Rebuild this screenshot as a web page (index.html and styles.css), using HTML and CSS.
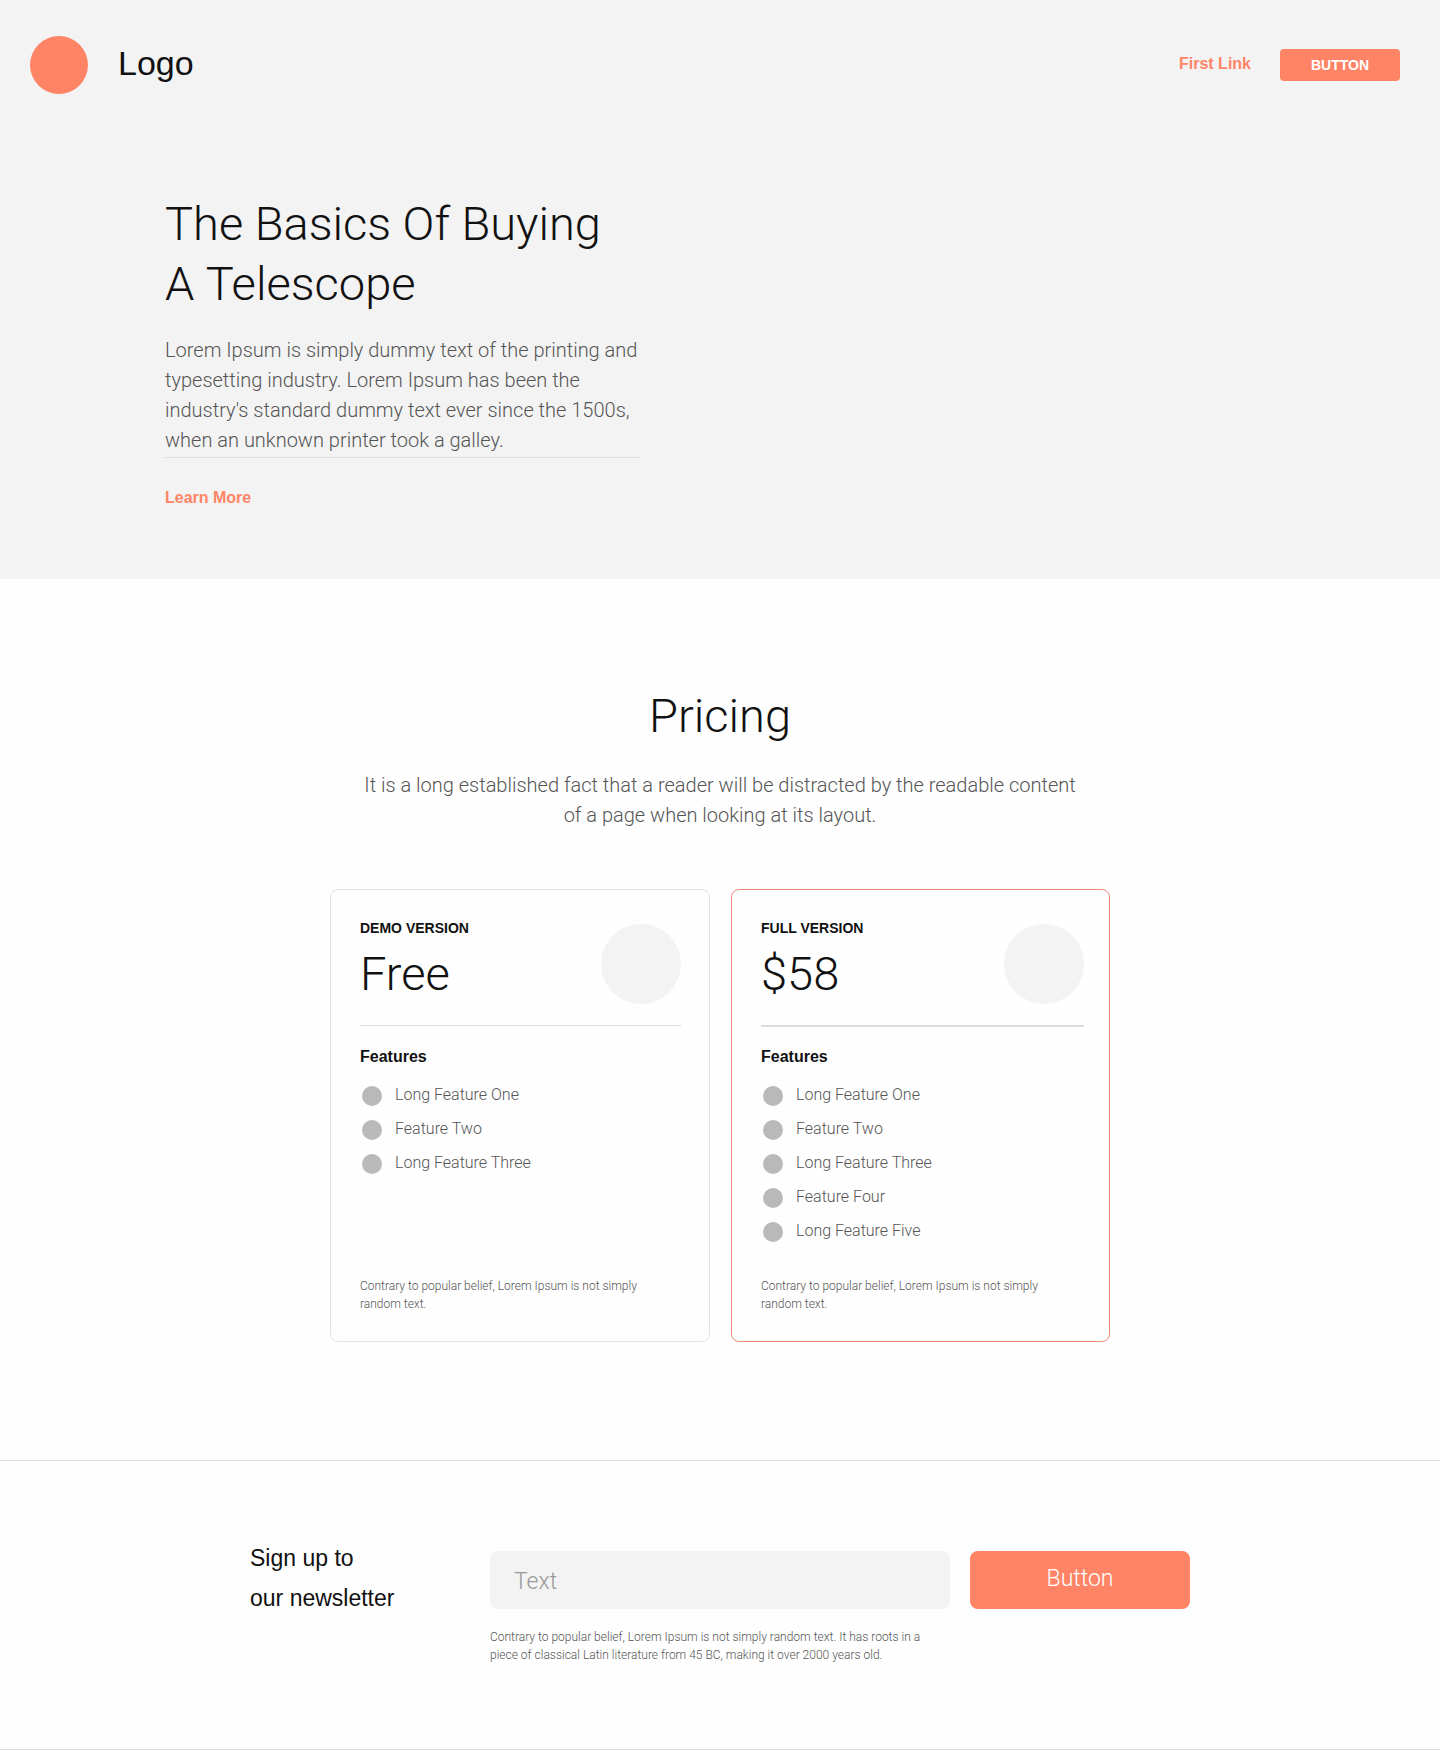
FILE: index.html
```
<!DOCTYPE html>
<html lang="en">
<head>
  <meta charset="utf-8">
  <meta name="viewport" content="width=device-width, initial-scale=1">
  <title>The Basics Of Buying A Telescope</title>
  <link rel="stylesheet" href="styles.css">
</head>
<body>
  <div class="hero">
    <header class="header">
      <span class="logo-mark"></span>
      <span class="logo-text">Logo</span>
      <nav class="nav">
        <a class="link" href="#first">First Link</a>
        <button class="button-small" type="button">BUTTON</button>
      </nav>
    </header>
    <section class="hero-inner">
      <div class="hero-copy">
        <h1 class="title">The Basics Of Buying A&nbsp;Telescope</h1>
        <p class="lead hero-lead">Lorem Ipsum is simply dummy text of the printing and typesetting industry. Lorem Ipsum has been the industry's standard dummy text ever since the 1500s, when an unknown printer took a galley.</p>
      </div>
      <a class="link" href="#pricing">Learn More</a>
    </section>
  </div>

  <main class="pricing" id="pricing">
    <h2 class="title">Pricing</h2>
    <p class="lead pricing-lead">It is a long established fact that a reader will be distracted by the readable content of a page when looking at its layout.</p>
    <div class="cards">
      <article class="card">
        <div class="card-head">
          <div>
            <h3 class="plan">DEMO VERSION</h3>
            <p class="price">Free</p>
          </div>
          <span class="card-image"></span>
        </div>
        <h4 class="features-title">Features</h4>
        <ul class="features">
          <li>Long Feature One</li>
          <li>Feature Two</li>
          <li>Long Feature Three</li>
        </ul>
        <p class="note card-note">Contrary to popular belief, Lorem Ipsum is not simply random text.</p>
      </article>
      <article class="card card-featured">
        <div class="card-head">
          <div>
            <h3 class="plan">FULL VERSION</h3>
            <p class="price">$58</p>
          </div>
          <span class="card-image"></span>
        </div>
        <h4 class="features-title">Features</h4>
        <ul class="features">
          <li>Long Feature One</li>
          <li>Feature Two</li>
          <li>Long Feature Three</li>
          <li>Feature Four</li>
          <li>Long Feature Five</li>
        </ul>
        <p class="note card-note">Contrary to popular belief, Lorem Ipsum is not simply random text.</p>
      </article>
    </div>
  </main>

  <footer class="newsletter">
    <form class="signup">
      <label class="signup-label" for="signup-text">Sign up to<br>our newsletter</label>
      <div class="signup-field">
        <input class="signup-input" id="signup-text" type="text" placeholder="Text">
        <p class="note signup-note">Contrary to popular belief, Lorem Ipsum is not simply random text. It has roots in a piece of classical Latin literature from 45 BC, making it over 2000 years old.</p>
      </div>
      <button class="button-large" type="submit">Button</button>
    </form>
  </footer>
</body>
</html>
```
FILE: styles.css
```
:root {
  --coral: #ff8466;
  --ink: #111;
  --text: #555;
  --line: #dcdcdc;
  --fill: #f3f3f3;
  --sans: "Liberation Sans", Arial, sans-serif;
  --light: Roboto, "Helvetica Neue", sans-serif;
}

* {
  box-sizing: border-box;
}

body {
  margin: 0;
  color: var(--ink);
  background: #fefefe;
  font-family: var(--sans);
}

h1, h2, h3, h4, p, ul {
  margin: 0;
  padding: 0;
}

button, input {
  border: 0;
  font: inherit;
}

button {
  cursor: pointer;
  color: #fff;
  background: var(--coral);
}

.title {
  font: 300 47px/60px var(--light);
}

.lead {
  color: var(--text);
  font: 300 20px/30px var(--light);
}

.note {
  color: var(--text);
  font: 300 12px/18px var(--light);
}

.link {
  color: var(--coral);
  font-size: 16px;
  font-weight: 700;
  line-height: 20px;
  text-decoration: none;
}

/* Hero */
.hero {
  background: var(--fill);
  padding-bottom: 71px;
}

.header {
  display: flex;
  align-items: center;
  padding: 36px 40px 36px 30px;
}

.logo-mark {
  width: 58px;
  height: 58px;
  border-radius: 50%;
  background: var(--coral);
}

.logo-text {
  margin-left: 30px;
  padding-bottom: 4px;
  font-size: 34px;
  line-height: 40px;
}

.nav {
  display: flex;
  align-items: center;
  gap: 29px;
  margin-left: auto;
}

.nav .link {
  padding-bottom: 2px;
}

.button-small {
  width: 120px;
  height: 32px;
  border-radius: 4px;
  font-size: 14px;
  font-weight: 700;
}

.hero-inner {
  max-width: 1110px;
  margin: 0 auto;
  padding-top: 64px;
}

.hero-copy {
  max-width: 475px;
  margin-bottom: 30px;
  padding-bottom: 2px;
  border-bottom: 1px solid var(--line);
}

.hero-lead {
  margin-top: 21px;
}

/* Pricing */
.pricing {
  max-width: 780px;
  margin: 0 auto;
  padding: 107px 0 118px;
  text-align: center;
}

.pricing-lead {
  max-width: 730px;
  margin: 24px auto 59px;
}

.cards {
  display: grid;
  grid-template-columns: 380fr 379fr;
  gap: 21px;
  text-align: left;
}

.card {
  display: flex;
  flex-direction: column;
  padding: 28px 28px 28px 29px;
  border: 1px solid #e4e4e4;
  border-radius: 8px;
}

.card-featured {
  padding-right: 25px;
  border-color: #e8897a;
}

.card-head {
  display: flex;
  justify-content: space-between;
  padding-bottom: 21px;
  border-bottom: 1px solid var(--line);
}

.card-featured .card-head {
  border-bottom-width: 2px;
}

.plan {
  font-size: 14px;
  line-height: 20px;
}

.price {
  margin-top: 8px;
  font: 300 47px/56px var(--light);
}

.card-image {
  width: 80px;
  height: 80px;
  margin-top: 6px;
  border-radius: 50%;
  background: var(--fill);
}

.features-title {
  margin: 21px 0 19px;
  font-size: 16px;
  line-height: 20px;
}

.card-featured .features-title {
  margin-top: 20px;
}

.features {
  display: flex;
  flex-direction: column;
  gap: 14px;
  padding-left: 2px;
  margin-bottom: 35px;
  list-style: none;
  color: var(--text);
  font: 300 16px/18px var(--light);
}

.features li {
  display: flex;
  gap: 13px;
}

.features li::before {
  content: "";
  width: 20px;
  height: 20px;
  border-radius: 50%;
  background: #b9b9b9;
}

.card-note {
  max-width: 300px;
  margin-top: auto;
}

/* Newsletter */
.newsletter {
  padding: 77px 0 85px;
  border-top: 1px solid var(--line);
  border-bottom: 1px solid var(--line);
}

.signup {
  display: grid;
  grid-template-columns: 220px 1fr 220px;
  gap: 20px;
  max-width: 940px;
  margin: 0 auto;
}

.signup-label {
  font-size: 23px;
  line-height: 40px;
}

.signup-field,
.button-large {
  margin-top: 13px;
}

.signup-input {
  display: block;
  width: 100%;
  height: 58px;
  padding: 2px 24px 0;
  border-radius: 8px;
  background: var(--fill);
  font: 300 23px/30px var(--light);
}

.signup-input::placeholder {
  color: #999;
}

.signup-note {
  max-width: 450px;
  margin-top: 19px;
}

.button-large {
  height: 58px;
  padding-bottom: 4px;
  border-radius: 8px;
  font: 300 23px/30px var(--light);
}

@media (max-width: 1110px) {
  .hero-inner,
  .pricing,
  .newsletter {
    padding-left: 30px;
    padding-right: 30px;
  }
}

@media (max-width: 800px) {
  .cards,
  .signup {
    grid-template-columns: 1fr;
  }
}
```
